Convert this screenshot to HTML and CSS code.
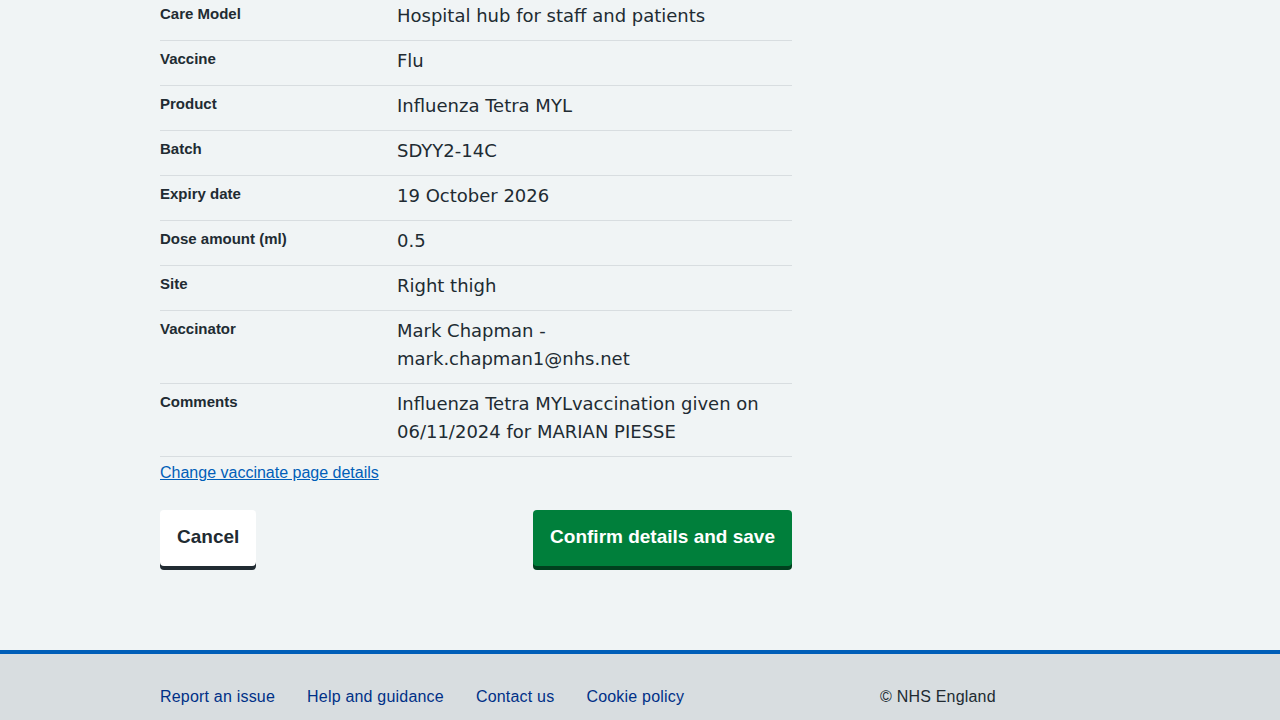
FILE: index.html
```html
<!DOCTYPE html>
<html lang="en">
<head>
<meta charset="utf-8">
<title>Check and confirm</title>
<link rel="stylesheet" href="styles.css">
</head>
<body>
<main class="page">
  <div class="content">
    <dl class="summary">
      <div class="row"><dt class="key">Care Model</dt><dd class="value">Hospital hub for staff and patients</dd></div>
      <div class="row"><dt class="key">Vaccine</dt><dd class="value">Flu</dd></div>
      <div class="row"><dt class="key">Product</dt><dd class="value">Influenza Tetra MYL</dd></div>
      <div class="row"><dt class="key">Batch</dt><dd class="value">SDYY2-14C</dd></div>
      <div class="row"><dt class="key">Expiry date</dt><dd class="value">19 October 2026</dd></div>
      <div class="row"><dt class="key">Dose amount (ml)</dt><dd class="value">0.5</dd></div>
      <div class="row"><dt class="key">Site</dt><dd class="value">Right thigh</dd></div>
      <div class="row"><dt class="key">Vaccinator</dt><dd class="value">Mark Chapman - mark.chapman1@nhs.net</dd></div>
      <div class="row"><dt class="key">Comments</dt><dd class="value">Influenza Tetra MYLvaccination given on 06/11/2024 for MARIAN PIESSE</dd></div>
    </dl>
    <p class="change"><a href="#" class="change-link">Change vaccinate page details</a></p>
    <div class="actions">
      <button class="btn btn-secondary" type="button">Cancel</button>
      <button class="btn btn-primary" type="button">Confirm details and save</button>
    </div>
  </div>
</main>
<footer class="footer">
  <div class="footer-inner">
    <ul class="footer-links">
      <li><a href="#">Report an issue</a></li>
      <li><a href="#">Help and guidance</a></li>
      <li><a href="#">Contact us</a></li>
      <li><a href="#">Cookie policy</a></li>
    </ul>
    <p class="copyright">© NHS England</p>
  </div>
</footer>
</body>
</html>
```

FILE: styles.css
```css
* { box-sizing: border-box; }

html, body {
  margin: 0;
  padding: 0;
}

body {
  background: #f0f4f5;
  color: #212b32;
  font-family: "Liberation Sans", Arial, sans-serif;
}

.page {
  width: 960px;
  margin: 0 auto;
  padding-bottom: 84px;
}

.content {
  width: 632px;
}

.summary {
  margin: -4px 0 0 0;
  padding: 0;
}

.row {
  display: grid;
  grid-template-columns: 237px 1fr;
  border-bottom: 1px solid #d8dde0;
}

.key {
  margin: 0;
  padding: 7px 16px 9px 0;
  font-size: 15px;
  font-weight: 700;
  line-height: 22px;
}

.value {
  margin: 0;
  padding: 6px 21px 10px 0;
  font-family: "DejaVu Sans", "Liberation Sans", sans-serif;
  font-size: 18px;
  line-height: 28px;
}

.change {
  margin: 4px 0 0 0;
  font-size: 16px;
  line-height: 24px;
}

.change-link {
  font-family: "Liberation Sans", Arial, sans-serif;
  color: #005eb8;
  text-decoration: underline;
}

.actions {
  display: flex;
  justify-content: space-between;
  align-items: flex-start;
  margin-top: 25px;
}

.btn {
  font-family: inherit;
  font-size: 19px;
  font-weight: 700;
  line-height: 30px;
  padding: 12px 17px 14px;
  border: 0;
  border-radius: 4px;
  cursor: pointer;
}

.btn-secondary {
  background: #ffffff;
  color: #212b32;
  box-shadow: 0 4px 0 #212b32;
}

.btn-primary {
  background: #007f3b;
  color: #ffffff;
  box-shadow: 0 4px 0 #00401e;
}

.footer {
  background: #d8dde0;
  border-top: 4px solid #005eb8;
}

.footer-inner {
  width: 960px;
  margin: 0 auto;
  display: flex;
  padding: 31px 0 11px;
}

.footer-links {
  list-style: none;
  margin: 0;
  padding: 0;
  width: 720px;
  display: flex;
  gap: 32px;
  font-size: 16px;
  line-height: 24px;
  letter-spacing: 0.2px;
}

.footer-links a {
  color: #003087;
  text-decoration: none;
}

.copyright {
  margin: 0;
  font-size: 16px;
  line-height: 24px;
  letter-spacing: 0.2px;
  color: #212b32;
}
```
